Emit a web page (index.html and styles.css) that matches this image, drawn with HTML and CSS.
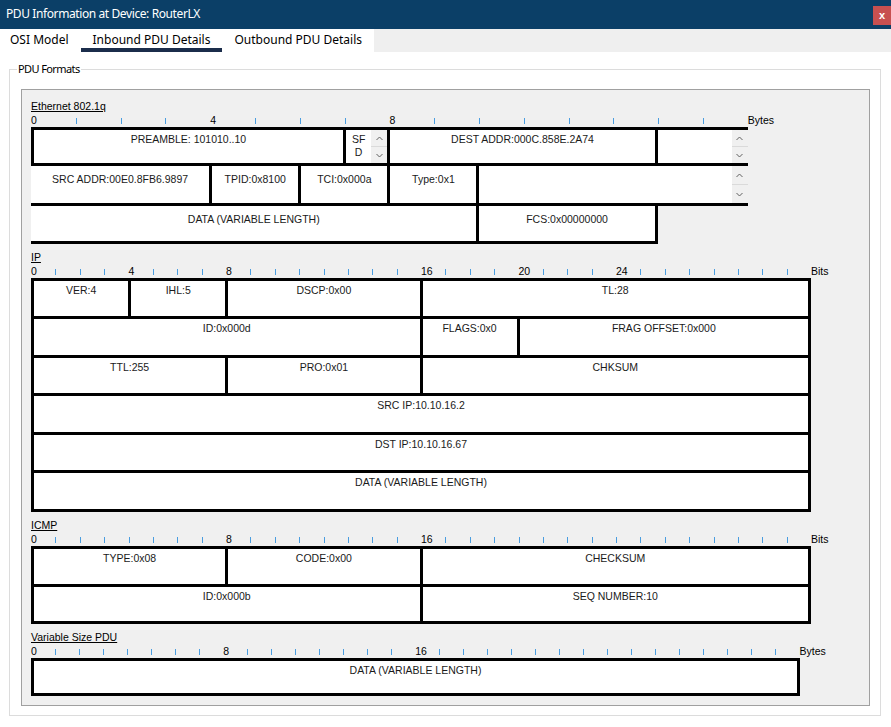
FILE: index.html
```html
<!DOCTYPE html>
<html lang="en">
<head>
  <meta charset="UTF-8">
  <title>PDU Information at Device: RouterLX</title>
  <meta name="viewport" content="width=device-width, initial-scale=1.0">
  <link rel="stylesheet" href="styles.css">
</head>

<body>
  <div class="window">
    <header class="titlebar">
      <span class="title">PDU Information at Device: RouterLX</span>
      <button class="close" type="button">x</button>
    </header>

    <nav class="tabs">
      <div class="tab-list">
        <span class="tab">OSI Model</span>
        <span class="tab active">Inbound PDU Details</span>
        <span class="tab">Outbound PDU Details</span>
      </div>
    </nav>

    <main class="content">
      <fieldset class="group">
        <legend>PDU Formats</legend>
        <div class="panel">

          <section class="pdu eth">
            <div class="pdu-name">Ethernet 802.1q</div>
            <div class="ruler" data-units="16" data-labels="0,4,8" data-unit="Bytes"></div>
            <div class="fields">
              <div class="cell w7">PREAMBLE: 101010..10</div>
              <div class="cell w1 split">
                <span class="txt">SF<br>D</span>
                <span class="spin">
                  <i><svg width="7" height="5" viewBox="0 0 7 5"><path d="M0.5 4 L3.5 1 L6.5 4" /></svg></i>
                  <i><svg width="7" height="5" viewBox="0 0 7 5"><path d="M0.5 1 L3.5 4 L6.5 1" /></svg></i>
                </span>
              </div>
              <div class="cell w6">DEST ADDR:000C.858E.2A74</div>
              <div class="cell w2 split edge">
                <span class="txt"></span>
                <span class="spin">
                  <i><svg width="7" height="5" viewBox="0 0 7 5"><path d="M0.5 4 L3.5 1 L6.5 4" /></svg></i>
                  <i><svg width="7" height="5" viewBox="0 0 7 5"><path d="M0.5 1 L3.5 4 L6.5 1" /></svg></i>
                </span>
              </div>

              <div class="cell w4 open">SRC ADDR:00E0.8FB6.9897</div>
              <div class="cell w2 low">TPID:0x8100</div>
              <div class="cell w2 low">TCI:0x000a</div>
              <div class="cell w2 low">Type:0x1</div>
              <div class="cell w6 split edge">
                <span class="txt"></span>
                <span class="spin">
                  <i><svg width="7" height="5" viewBox="0 0 7 5"><path d="M0.5 4 L3.5 1 L6.5 4" /></svg></i>
                  <i><svg width="7" height="5" viewBox="0 0 7 5"><path d="M0.5 1 L3.5 4 L6.5 1" /></svg></i>
                </span>
              </div>

              <div class="cell w10 open">DATA (VARIABLE LENGTH)</div>
              <div class="cell w4 low">FCS:0x00000000</div>
              <div class="blank w2"></div>
            </div>
          </section>

          <section class="pdu ip">
            <div class="pdu-name">IP</div>
            <div class="ruler" data-units="32" data-labels="0,4,8,16,20,24" data-unit="Bits"></div>
            <div class="fields">
              <div class="cell w4">VER:4</div>
              <div class="cell w4">IHL:5</div>
              <div class="cell w8">DSCP:0x00</div>
              <div class="cell w16">TL:28</div>

              <div class="cell w16">ID:0x000d</div>
              <div class="cell w4">FLAGS:0x0</div>
              <div class="cell w12">FRAG OFFSET:0x000</div>

              <div class="cell w8">TTL:255</div>
              <div class="cell w8">PRO:0x01</div>
              <div class="cell w16">CHKSUM</div>

              <div class="cell w32">SRC IP:10.10.16.2</div>
              <div class="cell w32">DST IP:10.10.16.67</div>
              <div class="cell w32">DATA (VARIABLE LENGTH)</div>
            </div>
          </section>

          <section class="pdu icmp">
            <div class="pdu-name">ICMP</div>
            <div class="ruler" data-units="32" data-labels="0,8,16" data-unit="Bits"></div>
            <div class="fields">
              <div class="cell w8">TYPE:0x08</div>
              <div class="cell w8">CODE:0x00</div>
              <div class="cell w16">CHECKSUM</div>

              <div class="cell w16">ID:0x000b</div>
              <div class="cell w16">SEQ NUMBER:10</div>
            </div>
          </section>

          <section class="pdu var">
            <div class="pdu-name">Variable Size PDU</div>
            <div class="ruler" data-units="32" data-labels="0,8,16" data-unit="Bytes"></div>
            <div class="fields">
              <div class="cell w32">DATA (VARIABLE LENGTH)</div>
            </div>
          </section>

        </div>
      </fieldset>
    </main>
  </div>

  <script>
    // ruler marks: a number at the labelled positions, a small tick elsewhere
    document.querySelectorAll('.ruler').forEach(function (ruler) {
      var units = Number(ruler.dataset.units);
      var labels = ruler.dataset.labels.split(',');

      for (var k = 0; k < units; k++) {
        var mark = document.createElement('span');
        mark.className = 'mark';
        if (labels.indexOf(String(k)) !== -1) {
          mark.textContent = k;
        } else {
          mark.innerHTML = '<i class="tick"></i>';
        }
        ruler.appendChild(mark);
      }

      var unit = document.createElement('span');
      unit.className = 'unit';
      unit.textContent = ruler.dataset.unit;
      ruler.appendChild(unit);
    });
  </script>
</body>
</html>
```

FILE: styles.css
```css
* {
  box-sizing: border-box;
}

body {
  margin: 0;
  background: #ffffff;
  font-family: "Noto Sans", "Open Sans", sans-serif;
  font-size: 12px;
  color: #000000;
}

.window {
  width: 891px;
  height: 727px;
  display: flex;
  flex-direction: column;
  overflow: hidden;
}

/* title bar */
.titlebar {
  height: 29px;
  flex: none;
  display: flex;
  justify-content: space-between;
  align-items: flex-start;
  padding-left: 6px;
  background: #0b3f67;
  color: #ffffff;
}

.title {
  line-height: 28px;
  letter-spacing: -0.4px;
}

.close {
  width: 18px;
  height: 19px;
  margin-top: 6px;
  padding: 0;
  border: 0;
  background: #c75050;
  color: #ffffff;
  font: bold 11px/17px "Liberation Sans", sans-serif;
}

/* tabs */
.tabs {
  height: 23px;
  flex: none;
  display: flex;
  background: #efefef;
}

.tab-list {
  display: flex;
  background: #ffffff;
}

.tab {
  padding: 3px 12px 0;
  line-height: 16px;
  border-bottom: 4px solid transparent;
  white-space: nowrap;
}

.tab:first-child {
  padding-left: 10px;
}

.tab.active {
  border-bottom-color: #1b2d4b;
}

/* group box */
.content {
  flex: 1;
}

.group {
  margin: 10px 10px 0 9px;
  padding: 13px 10px 9px 11px;
  border: 1px solid #dcdcdc;
  min-width: 0;
}

.group legend {
  margin-left: -4px;
  padding: 0 1px;
  font-size: 11px;
  line-height: 14px;
  letter-spacing: -0.6px;
}

.panel {
  display: flex;
  flex-direction: column;
  gap: 7px;
  padding: 10px 9px 9px;
  border: 1px solid #a0a0a0;
  background: #f0f0f0;
  font-family: "Liberation Sans", Arial, sans-serif;
  font-size: 10.5px;
}

/* one pdu block */
.pdu-name {
  line-height: 13px;
  text-decoration: underline;
}

.ruler {
  display: flex;
  align-items: flex-end;
  height: 14px;
}

.eth .ruler { --pitch: 44.8px; }
.ip .ruler,
.icmp .ruler { --pitch: 24.375px; }
.var .ruler { --pitch: 24.03px; }

.mark {
  flex: 0 0 var(--pitch);
  line-height: 13px;
}

.tick {
  display: block;
  width: 1px;
  height: 6px;
  margin-bottom: 3px;
  background: #4a9de0;
}

.unit {
  line-height: 13px;
  white-space: nowrap;
}

/* field grid: black background shows through the gaps as borders */
.fields {
  display: grid;
  gap: 3px;
  padding: 3px;
  background: #000000;
  grid-template-columns: repeat(32, 1fr);
}

.eth .fields {
  width: 717px;
  padding-right: 0;
  grid-template-columns: repeat(16, 41.56px);
  grid-template-rows: 33px 37px 35px;
}

.ip .fields {
  width: 780px;
  grid-template-rows: 35px 36px 35px 36px 35px 36px;
}

.icmp .fields {
  width: 780px;
  grid-template-rows: 35px 34px;
}

.var .fields {
  width: 769px;
  grid-template-columns: 1fr;
  grid-template-rows: 32px;
}

.cell {
  padding-top: 3px;
  background: #ffffff;
  color: #1a1a1a;
  line-height: 13px;
  text-align: center;
  white-space: nowrap;
}

/* lower ethernet rows sit a little lower and have no left rule */
.cell.low {
  padding-top: 7px;
}

.cell.open {
  margin-left: -3px;
  padding-top: 7px;
}

.cell.split {
  display: flex;
  padding-top: 0;
}

.split .txt {
  flex: 1;
  padding-top: 3px;
}

.edge {
  margin-right: -4px;
}

.blank {
  margin: 0 -4px -3px 0;
  background: #f0f0f0;
}

.spin {
  width: 16px;
  display: flex;
  flex-direction: column;
  background: #f0f0f0;
}

.spin i {
  flex: 1;
  display: flex;
  align-items: center;
  justify-content: center;
}

.spin i:first-child {
  border-bottom: 1px solid #dadada;
}

.spin path {
  fill: none;
  stroke: #606060;
  stroke-width: 1;
}

.w1 { grid-column: span 1; }
.w2 { grid-column: span 2; }
.w4 { grid-column: span 4; }
.w6 { grid-column: span 6; }
.w7 { grid-column: span 7; }
.w8 { grid-column: span 8; }
.w10 { grid-column: span 10; }
.w12 { grid-column: span 12; }
.w16 { grid-column: span 16; }
.w32 { grid-column: 1 / -1; }
```
